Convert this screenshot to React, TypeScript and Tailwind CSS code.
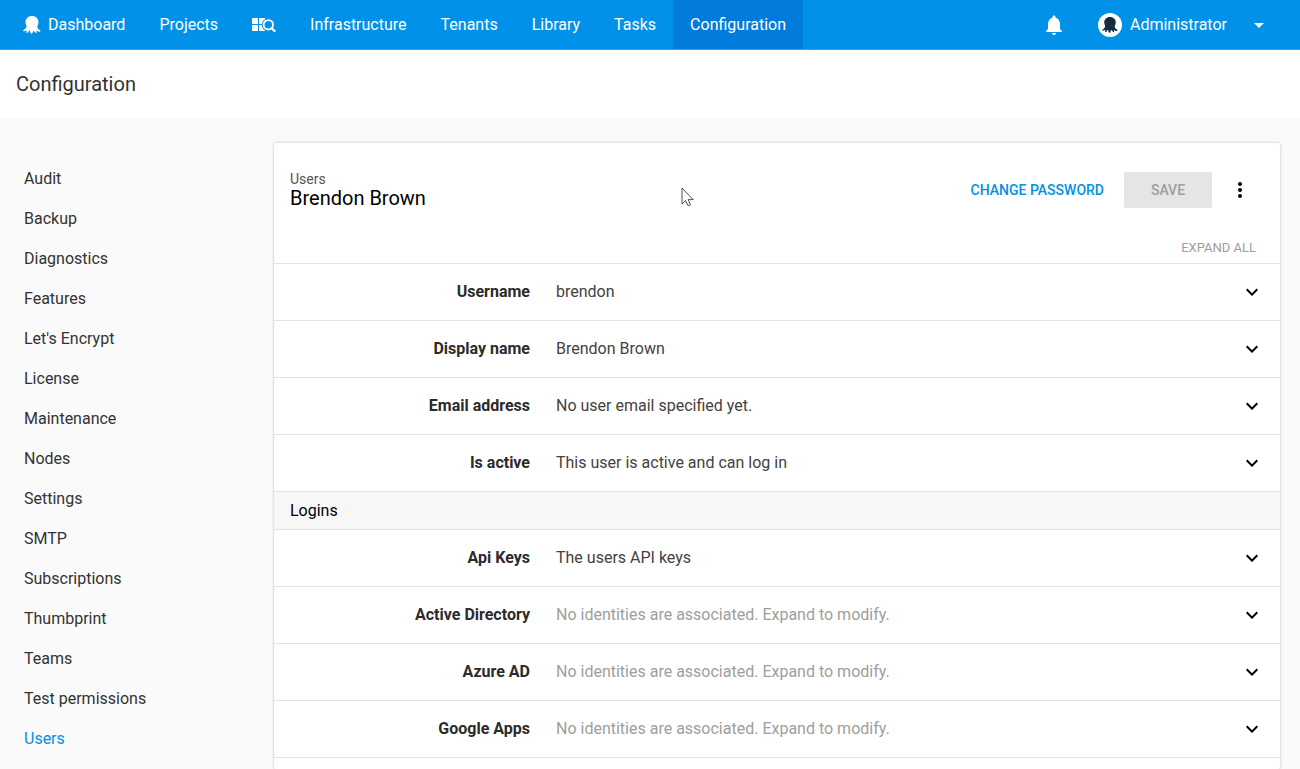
import type { ReactNode } from "react";
import { MdExpandMore, MdMoreVert, MdNotifications, MdArrowDropDown } from "react-icons/md";

function Octopus({ className }: { className: string }) {
  return (
    <svg viewBox="0 0 54 54" fill="currentColor" className={className} aria-hidden="true">
      <path d="M27 0C15.500 0 7.500 8 7.500 18.500C7.500 23.500 10.500 28 10.500 31C10.500 36 5 40.500 1 43C0 45 1.500 46.500 3.500 46C6.500 45.500 9 44 11 43C11 46 10 48 10.500 50C11.500 51.500 14 51 15 49.500C16.500 47 18 44 19.500 43C21.500 45 22 49 23 52C24 54 27 54 28 52C29 49 29.500 46 31.500 44C33.500 45 35.500 48.500 37.500 50.500C39 52 41 51 41 49.500C41 47.500 40 45.500 40 43.500C43 44.500 46 47.500 50 47.500C53 47 53 44.500 51 43C47 40.500 43 36.500 43 32C43 28 46.500 24 46.500 18.500C46.500 8 38.500 0 27 0Z" />
    </svg>
  );
}

function QuickSearch() {
  return (
    <svg viewBox="0 0 24 16" className="h-4 w-6" aria-hidden="true">
      <g fill="white">
        <rect x="0" y="1" width="6" height="6" rx="0.600" />
        <rect x="7" y="1" width="6" height="6" rx="0.600" />
        <rect x="0" y="8" width="6" height="6" rx="0.600" />
        <rect x="7" y="8" width="6" height="6" rx="0.600" />
      </g>
      <circle cx="16.300" cy="7.800" r="6.600" fill="#0291e8" />
      <circle cx="16.300" cy="7.800" r="4.700" fill="none" stroke="white" strokeWidth="1.900" />
      <path d="M19.700 11.200L22.500 14" stroke="white" strokeWidth="2.300" strokeLinecap="round" />
    </svg>
  );
}

function NavItem({ active, label, children }: { active?: boolean; label?: string; children: ReactNode }) {
  return (
    <a
      href="#"
      aria-label={label}
      aria-current={active ? "page" : undefined}
      className={active ? "flex items-center bg-[#017cdd] px-[17px]" : "flex items-center px-[17px]"}
    >
      {children}
    </a>
  );
}

const sections = [
  "Audit", "Backup", "Diagnostics", "Features", "Let's Encrypt", "License", "Maintenance", "Nodes",
  "Settings", "SMTP", "Subscriptions", "Thumbprint", "Teams", "Test permissions", "Users",
];

function Row({ label, muted, children }: { label: string; muted?: boolean; children: ReactNode }) {
  return (
    <button type="button" className="flex h-[57px] w-full items-center border-b border-[#e2e2e2] pr-4 text-left">
      <span className="w-64 shrink-0 text-right font-bold text-[#2b2b2b]">{label}</span>
      <span className={muted ? "ml-[26px] flex-1 text-[#9e9e9e]" : "ml-[26px] flex-1 text-[#424242]"}>{children}</span>
      <MdExpandMore className="size-6 text-black" />
    </button>
  );
}

const providers = ["Active Directory", "Azure AD", "Google Apps"];

export default function App() {
  return (
    <div className="flex h-screen flex-col overflow-hidden bg-[#fafafa] font-['Roboto',sans-serif] text-base text-[#333]">
      <header className="flex h-[50px] shrink-0 justify-between border-b border-[#2fa4ee] bg-[#0291e8] text-white">
        <nav className="flex pl-1.5">
          <NavItem>
            <Octopus className="mr-[7px] size-[18px]" />
            Dashboard
          </NavItem>
          <NavItem>Projects</NavItem>
          <NavItem label="Quick search"><QuickSearch /></NavItem>
          <NavItem>Infrastructure</NavItem>
          <NavItem>Tenants</NavItem>
          <NavItem>Library</NavItem>
          <NavItem>Tasks</NavItem>
          <NavItem active>Configuration</NavItem>
        </nav>
        <div className="flex items-center pr-[29px]">
          <button type="button" aria-label="Notifications" className="mr-8">
            <MdNotifications className="size-6" />
          </button>
          <button type="button" className="flex items-center">
            <span className="mr-2 flex size-6 items-center justify-center rounded-full bg-white">
              <Octopus className="size-4 text-[#142c42]" />
            </span>
            Administrator
            <MdArrowDropDown className="ml-5 size-6" />
          </button>
        </div>
      </header>

      <div className="bg-white px-4 py-5">
        <h1 className="text-xl leading-7">Configuration</h1>
      </div>

      <div className="flex min-h-0 flex-1 pt-[25px] pr-5">
        <nav aria-label="Configuration" className="w-[274px] shrink-0 pt-4 pl-6">
          {sections.map((name) => (
            <a
              key={name}
              href="#"
              className={name === "Users" ? "flex h-10 items-center text-[#0291e8]" : "flex h-10 items-center"}
            >
              {name}
            </a>
          ))}
        </nav>

        <main className="relative min-w-0 flex-1 rounded-[2px] bg-white shadow-[0_0_3px_rgba(0,0,0,0.250)]">
          <div className="flex items-center justify-between pt-[29px] pr-7 pl-4">
            <div className="h-9">
              <p className="text-sm leading-[14px] text-[#555]">Users</p>
              <h2 className="text-xl leading-6 text-black">Brendon Brown</h2>
            </div>
            <div className="flex h-9 items-center text-sm">
              <button type="button" className="mr-5 font-medium text-[#0291e8]">CHANGE PASSWORD</button>
              <button type="button" disabled className="h-9 w-[88px] rounded-[2px] bg-[#e5e5e5] font-medium text-[#9e9e9e]">
                SAVE
              </button>
              <button type="button" aria-label="More actions" className="ml-4">
                <MdMoreVert className="size-6 text-black" />
              </button>
            </div>
          </div>
          <div className="flex justify-end border-b border-[#e2e2e2] pt-[30px] pr-6 pb-[5px] text-[13px] leading-5 text-[#9e9e9e]">
            <button type="button">EXPAND ALL</button>
          </div>

          <Row label="Username">brendon</Row>
          <Row label="Display name">Brendon Brown</Row>
          <Row label="Email address">No user email specified yet.</Row>
          <Row label="Is active">This user is active and can log in</Row>
          <h3 className="flex h-[38px] items-center border-b border-[#e2e2e2] bg-[#f7f7f7] px-4 text-black">Logins</h3>
          <Row label="Api Keys">The users API keys</Row>
          {providers.map((name) => (
            <Row key={name} label={name} muted>
              No identities are associated. Expand to modify.
            </Row>
          ))}

          <svg viewBox="0 0 13 20" className="absolute top-11 left-[407px] h-5 w-[13px]" aria-hidden="true">
            <path
              d="M1 1V17L4.500 13.500L7 18.800L9.500 17.800L7.200 12.600H12.200Z"
              fill="white"
              stroke="#222"
              strokeWidth="0.800"
            />
          </svg>
        </main>
      </div>
    </div>
  );
}
